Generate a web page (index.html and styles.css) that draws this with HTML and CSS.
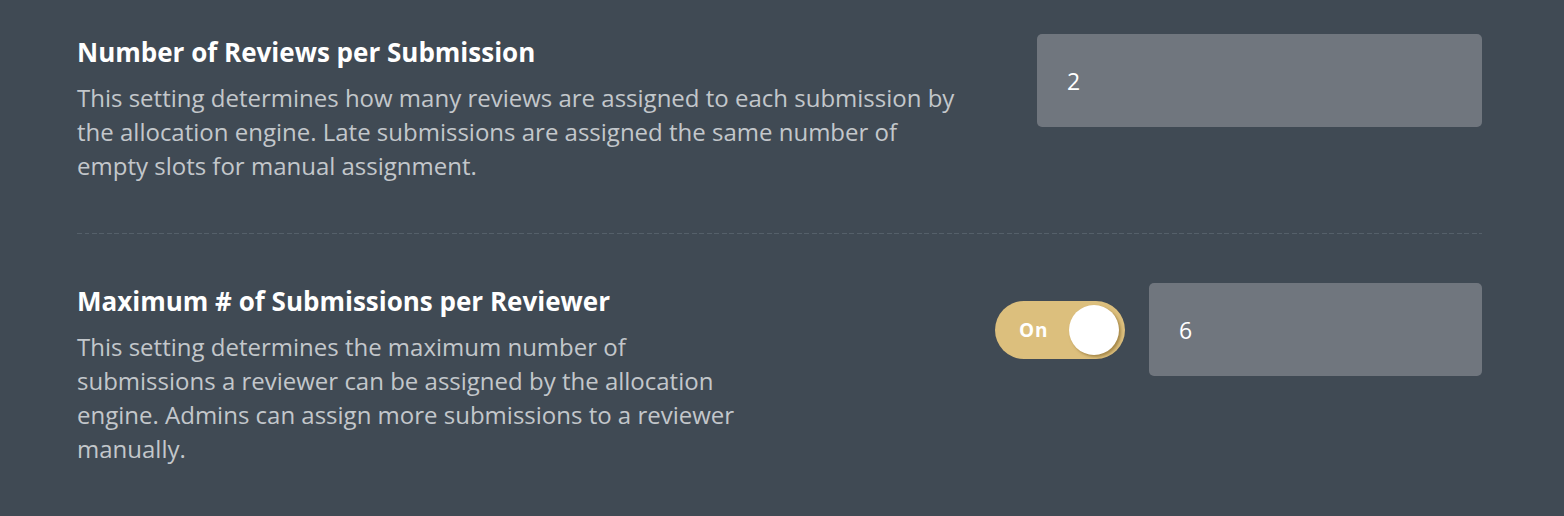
FILE: index.html
```html
<!DOCTYPE html>
<html>
<head>
<meta charset="utf-8">
<link rel="stylesheet" href="styles.css">
</head>
<body>
<div class="settings">
  <div class="row row-first">
    <div class="text text-wide">
      <h3 class="title">Number of Reviews per Submission</h3>
      <p class="desc">This setting determines how many reviews are assigned to each submission by the allocation engine. Late submissions are assigned the same number of empty slots for manual assignment.</p>
    </div>
    <div class="controls">
      <div class="field field-wide">2</div>
    </div>
  </div>
  <div class="divider"></div>
  <div class="row row-second">
    <div class="text text-narrow">
      <h3 class="title">Maximum # of Submissions per Reviewer</h3>
      <p class="desc">This setting determines the maximum number of submissions a reviewer can be assigned by the allocation engine. Admins can assign more submissions to a reviewer manually.</p>
    </div>
    <div class="controls">
      <div class="toggle"><span class="toggle-label">On</span><span class="knob"></span></div>
      <div class="field field-narrow">6</div>
    </div>
  </div>
</div>
</body>
</html>
```
FILE: styles.css
```css
html, body {
  margin: 0;
  padding: 0;
  background: #404a54;
  height: 516px;
  overflow: hidden;
}
body {
  font-family: "Open Sans", "Liberation Sans", sans-serif;
}
.settings {
  padding: 35px 82px 0 77px;
}
.row {
  display: flex;
  justify-content: space-between;
  align-items: flex-start;
}
.text-wide { width: 886px; }
.text-narrow { width: 664px; }
.title {
  margin: 0;
  color: #ffffff;
  font-size: 26px;
  font-weight: 700;
  line-height: 35px;
}
.desc {
  margin: 11px 0 0;
  color: #c3c7cb;
  font-size: 24px;
  line-height: 34px;
}
.controls {
  display: flex;
  align-items: center;
  gap: 24px;
  margin-top: -1px;
}
.field {
  height: 93px;
  box-sizing: border-box;
  background: #70767e;
  border-radius: 5px;
  color: #ffffff;
  font-size: 23px;
  display: flex;
  align-items: center;
  padding-left: 30px;
}
.field-wide { width: 445px; }
.field-narrow { width: 333px; }
.divider {
  height: 1px;
  margin: 50px 0 50px;
  background: repeating-linear-gradient(90deg, #55606a 0 5px, transparent 5px 7.5px);
}
.toggle {
  width: 130px;
  height: 58px;
  box-sizing: border-box;
  border-radius: 29px;
  background: #dcbf7d;
  display: flex;
  align-items: center;
  justify-content: space-between;
  padding: 0 6px 0 24px;
}
.toggle-label {
  color: #ffffff;
  font-weight: 700;
  font-size: 19px;
  letter-spacing: 0.8px;
}
.knob {
  width: 50px;
  height: 50px;
  border-radius: 50%;
  background: #ffffff;
  box-shadow: 2px 2px 3px rgba(120, 90, 30, 0.55);
}
```
